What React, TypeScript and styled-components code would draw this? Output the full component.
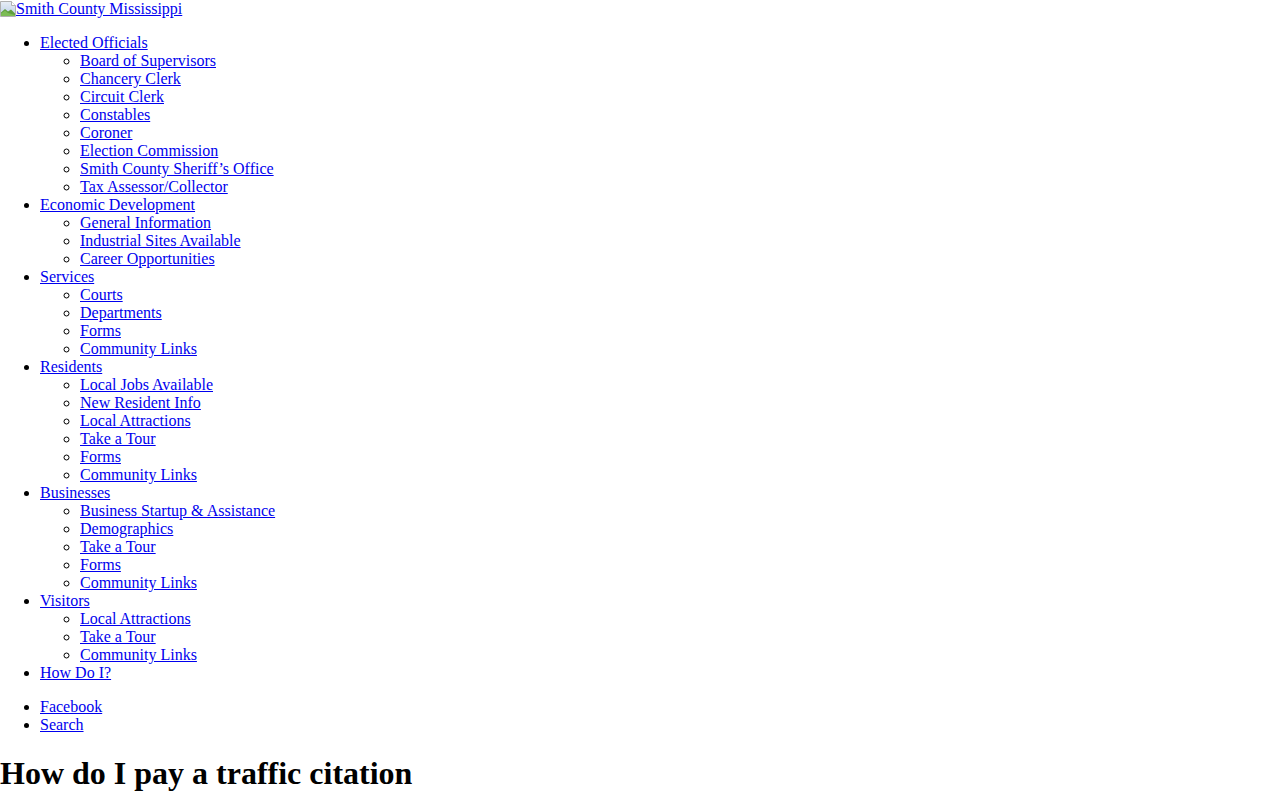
import React from "react";
import styled, { createGlobalStyle } from "styled-components";

const GlobalStyle = createGlobalStyle`
  html, body {
    margin: 0;
    padding: 0;
    background: #ffffff;
  }
  body {
    font-family: "Liberation Serif", "Times New Roman", serif;
    font-size: 16px;
    line-height: normal;
    color: #000000;
  }
`;

interface NavItem {
  label: string;
  children?: string[];
}

const NAV: NavItem[] = [
  {
    label: "Elected Officials",
    children: [
      "Board of Supervisors",
      "Chancery Clerk",
      "Circuit Clerk",
      "Constables",
      "Coroner",
      "Election Commission",
      "Smith County Sheriff’s Office",
      "Tax Assessor/Collector",
    ],
  },
  {
    label: "Economic Development",
    children: ["General Information", "Industrial Sites Available", "Career Opportunities"],
  },
  {
    label: "Services",
    children: ["Courts", "Departments", "Forms", "Community Links"],
  },
  {
    label: "Residents",
    children: [
      "Local Jobs Available",
      "New Resident Info",
      "Local Attractions",
      "Take a Tour",
      "Forms",
      "Community Links",
    ],
  },
  {
    label: "Businesses",
    children: [
      "Business Startup & Assistance",
      "Demographics",
      "Take a Tour",
      "Forms",
      "Community Links",
    ],
  },
  {
    label: "Visitors",
    children: ["Local Attractions", "Take a Tour", "Community Links"],
  },
  { label: "How Do I?" },
];

const SOCIAL = ["Facebook", "Search"];

const Link = styled.a`
  color: #0000ee;
  text-decoration: underline;
`;

const LogoLink = styled(Link)`
  display: inline-block;
  line-height: 18px;
`;

// broken-image placeholder the browser shows in front of the alt text
const BrokenIcon = styled.svg`
  width: 16px;
  height: 16px;
  vertical-align: -3px;
`;

const Menu = styled.ul`
  margin: 16px 0;
  padding-left: 40px;
  list-style-type: disc;
`;

const SubMenu = styled.ul`
  margin: 0;
  padding-left: 40px;
  list-style-type: circle;
`;

const Item = styled.li`
  line-height: 18px;
`;

const Title = styled.h1`
  margin: 21px 0;
  font-size: 32px;
  font-weight: bold;
  line-height: 37px;
`;

const BrokenImage: React.FC = () => (
  <BrokenIcon viewBox="0 0 16 16" aria-hidden="true">
    <defs>
      <linearGradient id="sky" x1="0" y1="0" x2="0" y2="1">
        <stop offset="0" stopColor="#e8eef6" />
        <stop offset="1" stopColor="#b9cde6" />
      </linearGradient>
    </defs>
    <path d="M0.5 0.5h11l4 4v11h-15z" fill="url(#sky)" stroke="#b0b0b0" />
    <path d="M1 15V11.5L5 8l3 2.5L11 8.5l4 4V15z" fill="#5f9e3c" />
    <path d="M1 15V12.5L5 9.5l3 2.5L15 14v1z" fill="#7cbc55" />
    <path d="M11.5 0.5v4h4" fill="#ffffff" stroke="#b0b0b0" />
  </BrokenIcon>
);

const App: React.FC = () => (
  <>
    <GlobalStyle />
    <header>
      <LogoLink href="#">
        <BrokenImage />
        Smith County Mississippi
      </LogoLink>
      <nav>
        <Menu>
          {NAV.map(item => (
            <Item key={item.label}>
              <Link href="#">{item.label}</Link>
              {item.children && (
                <SubMenu>
                  {item.children.map(child => (
                    <Item key={child}>
                      <Link href="#">{child}</Link>
                    </Item>
                  ))}
                </SubMenu>
              )}
            </Item>
          ))}
        </Menu>
      </nav>
      <Menu>
        {SOCIAL.map(s => (
          <Item key={s}>
            <Link href="#">{s}</Link>
          </Item>
        ))}
      </Menu>
    </header>
    <main>
      <Title>How do I pay a traffic citation</Title>
    </main>
  </>
);

export default App;
